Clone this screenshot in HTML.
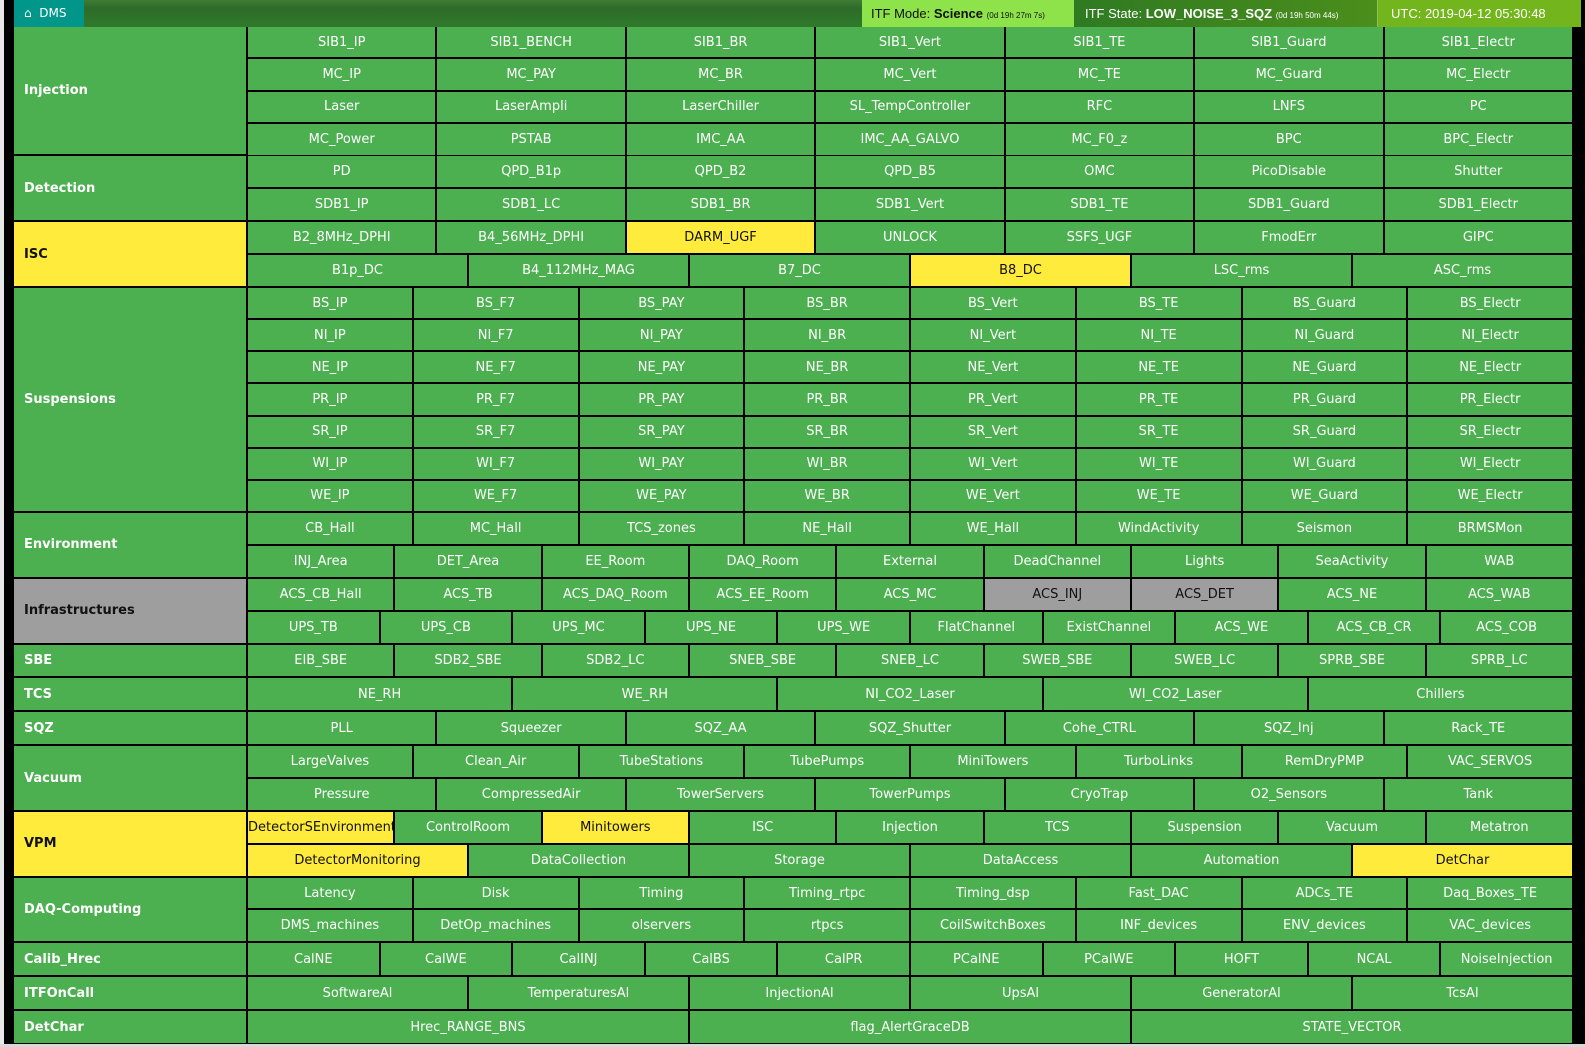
<!DOCTYPE html>
<html><head><meta charset="utf-8">
<style>
*{box-sizing:border-box;margin:0;padding:0}
html,body{width:1585px;height:1047px;overflow:hidden;background:#000;font-family:"DejaVu Sans","Liberation Sans",sans-serif}
#lstrip{position:absolute;left:0;top:0;width:4px;height:1047px;background:#e8e8e8}
#bot{position:absolute;left:0;top:1044px;width:1585px;height:3px;background:#d8d8d8}
#top{position:absolute;left:14px;top:0;width:1567px;height:27px;background:linear-gradient(#3f7d35,#2e6b2a 30%,#2f7a2b);}
#dms{position:absolute;left:0;top:0;width:70px;height:27px;background:#00968a;color:#fff;font-size:12px;line-height:27px;padding-left:10px}
.tb{position:absolute;top:0;height:27px;line-height:27px;font-size:13px;white-space:nowrap;font-family:"Liberation Sans",sans-serif;overflow:hidden}
.tb small{font-size:8px}
#mode{left:848px;width:212px;background:#8ee24a;color:#111;padding-left:9px}
#state{left:1060px;width:304px;background:linear-gradient(90deg,#2f7a22,#4b8e1c);color:#fff;padding-left:11px;border-right:1px solid #8fbf60}
#utc{left:1364px;width:203px;background:#72b51c;color:#fff;padding-left:13px}
#grid{position:absolute;left:14px;top:27px;width:1558px;height:1016px;display:flex;flex-direction:column;gap:2px;background:#000}
.g{display:flex;gap:2px;min-height:0}
.lab{width:232px;flex:none;background:#4caf50;color:#fff;font-weight:bold;font-size:13px;display:flex;align-items:center;padding-left:10px}
.r{flex:1;display:flex;flex-direction:column;gap:2px}
.s{flex:1;display:flex;gap:2px}
.s>div{flex:1 1 0;min-width:0;background:#4caf50;color:#fff;font-size:13px;text-align:center;white-space:nowrap;overflow:hidden;display:flex;align-items:center;justify-content:center}
.s>div.y,.lab.y{background:#ffeb3b;color:#111}
.s>div.gr,.lab.gr{background:#9e9e9e;color:#111}
.s>div.cl{justify-content:flex-start}
</style></head><body>
<div id="lstrip"></div>
<div id="top"><div id="dms">&#8962;&nbsp; DMS</div>
<div class="tb" id="mode">ITF Mode: <b>Science</b> <small>(0d 19h 27m 7s)</small></div>
<div class="tb" id="state">ITF State: <b>LOW_NOISE_3_SQZ</b> <small>(0d 19h 50m 44s)</small></div>
<div class="tb" id="utc">UTC: 2019-04-12 05:30:48</div>
</div>
<div id="grid">
<div class="g" style="flex:4"><div class="lab">Injection</div><div class="r">
<div class="s"><div>SIB1_IP</div><div>SIB1_BENCH</div><div>SIB1_BR</div><div>SIB1_Vert</div><div>SIB1_TE</div><div>SIB1_Guard</div><div>SIB1_Electr</div></div>
<div class="s"><div>MC_IP</div><div>MC_PAY</div><div>MC_BR</div><div>MC_Vert</div><div>MC_TE</div><div>MC_Guard</div><div>MC_Electr</div></div>
<div class="s"><div>Laser</div><div>LaserAmpli</div><div>LaserChiller</div><div>SL_TempController</div><div>RFC</div><div>LNFS</div><div>PC</div></div>
<div class="s"><div>MC_Power</div><div>PSTAB</div><div>IMC_AA</div><div>IMC_AA_GALVO</div><div>MC_F0_z</div><div>BPC</div><div>BPC_Electr</div></div>
</div></div>
<div class="g" style="flex:2"><div class="lab">Detection</div><div class="r">
<div class="s"><div>PD</div><div>QPD_B1p</div><div>QPD_B2</div><div>QPD_B5</div><div>OMC</div><div>PicoDisable</div><div>Shutter</div></div>
<div class="s"><div>SDB1_IP</div><div>SDB1_LC</div><div>SDB1_BR</div><div>SDB1_Vert</div><div>SDB1_TE</div><div>SDB1_Guard</div><div>SDB1_Electr</div></div>
</div></div>
<div class="g" style="flex:2"><div class="lab y">ISC</div><div class="r">
<div class="s"><div>B2_8MHz_DPHI</div><div>B4_56MHz_DPHI</div><div class="y">DARM_UGF</div><div>UNLOCK</div><div>SSFS_UGF</div><div>FmodErr</div><div>GIPC</div></div>
<div class="s"><div>B1p_DC</div><div>B4_112MHz_MAG</div><div>B7_DC</div><div class="y">B8_DC</div><div>LSC_rms</div><div>ASC_rms</div></div>
</div></div>
<div class="g" style="flex:7"><div class="lab">Suspensions</div><div class="r">
<div class="s"><div>BS_IP</div><div>BS_F7</div><div>BS_PAY</div><div>BS_BR</div><div>BS_Vert</div><div>BS_TE</div><div>BS_Guard</div><div>BS_Electr</div></div>
<div class="s"><div>NI_IP</div><div>NI_F7</div><div>NI_PAY</div><div>NI_BR</div><div>NI_Vert</div><div>NI_TE</div><div>NI_Guard</div><div>NI_Electr</div></div>
<div class="s"><div>NE_IP</div><div>NE_F7</div><div>NE_PAY</div><div>NE_BR</div><div>NE_Vert</div><div>NE_TE</div><div>NE_Guard</div><div>NE_Electr</div></div>
<div class="s"><div>PR_IP</div><div>PR_F7</div><div>PR_PAY</div><div>PR_BR</div><div>PR_Vert</div><div>PR_TE</div><div>PR_Guard</div><div>PR_Electr</div></div>
<div class="s"><div>SR_IP</div><div>SR_F7</div><div>SR_PAY</div><div>SR_BR</div><div>SR_Vert</div><div>SR_TE</div><div>SR_Guard</div><div>SR_Electr</div></div>
<div class="s"><div>WI_IP</div><div>WI_F7</div><div>WI_PAY</div><div>WI_BR</div><div>WI_Vert</div><div>WI_TE</div><div>WI_Guard</div><div>WI_Electr</div></div>
<div class="s"><div>WE_IP</div><div>WE_F7</div><div>WE_PAY</div><div>WE_BR</div><div>WE_Vert</div><div>WE_TE</div><div>WE_Guard</div><div>WE_Electr</div></div>
</div></div>
<div class="g" style="flex:2"><div class="lab">Environment</div><div class="r">
<div class="s"><div>CB_Hall</div><div>MC_Hall</div><div>TCS_zones</div><div>NE_Hall</div><div>WE_Hall</div><div>WindActivity</div><div>Seismon</div><div>BRMSMon</div></div>
<div class="s"><div>INJ_Area</div><div>DET_Area</div><div>EE_Room</div><div>DAQ_Room</div><div>External</div><div>DeadChannel</div><div>Lights</div><div>SeaActivity</div><div>WAB</div></div>
</div></div>
<div class="g" style="flex:2"><div class="lab gr">Infrastructures</div><div class="r">
<div class="s"><div>ACS_CB_Hall</div><div>ACS_TB</div><div>ACS_DAQ_Room</div><div>ACS_EE_Room</div><div>ACS_MC</div><div class="gr">ACS_INJ</div><div class="gr">ACS_DET</div><div>ACS_NE</div><div>ACS_WAB</div></div>
<div class="s"><div>UPS_TB</div><div>UPS_CB</div><div>UPS_MC</div><div>UPS_NE</div><div>UPS_WE</div><div>FlatChannel</div><div>ExistChannel</div><div>ACS_WE</div><div>ACS_CB_CR</div><div>ACS_COB</div></div>
</div></div>
<div class="g" style="flex:1"><div class="lab">SBE</div><div class="r">
<div class="s"><div>EIB_SBE</div><div>SDB2_SBE</div><div>SDB2_LC</div><div>SNEB_SBE</div><div>SNEB_LC</div><div>SWEB_SBE</div><div>SWEB_LC</div><div>SPRB_SBE</div><div>SPRB_LC</div></div>
</div></div>
<div class="g" style="flex:1"><div class="lab">TCS</div><div class="r">
<div class="s"><div>NE_RH</div><div>WE_RH</div><div>NI_CO2_Laser</div><div>WI_CO2_Laser</div><div>Chillers</div></div>
</div></div>
<div class="g" style="flex:1"><div class="lab">SQZ</div><div class="r">
<div class="s"><div>PLL</div><div>Squeezer</div><div>SQZ_AA</div><div>SQZ_Shutter</div><div>Cohe_CTRL</div><div>SQZ_Inj</div><div>Rack_TE</div></div>
</div></div>
<div class="g" style="flex:2"><div class="lab">Vacuum</div><div class="r">
<div class="s"><div>LargeValves</div><div>Clean_Air</div><div>TubeStations</div><div>TubePumps</div><div>MiniTowers</div><div>TurboLinks</div><div>RemDryPMP</div><div>VAC_SERVOS</div></div>
<div class="s"><div>Pressure</div><div>CompressedAir</div><div>TowerServers</div><div>TowerPumps</div><div>CryoTrap</div><div>O2_Sensors</div><div>Tank</div></div>
</div></div>
<div class="g" style="flex:2"><div class="lab y">VPM</div><div class="r">
<div class="s"><div class="y cl">DetectorSEnvironmentMonitoring</div><div>ControlRoom</div><div class="y">Minitowers</div><div>ISC</div><div>Injection</div><div>TCS</div><div>Suspension</div><div>Vacuum</div><div>Metatron</div></div>
<div class="s"><div class="y">DetectorMonitoring</div><div>DataCollection</div><div>Storage</div><div>DataAccess</div><div>Automation</div><div class="y">DetChar</div></div>
</div></div>
<div class="g" style="flex:2"><div class="lab">DAQ-Computing</div><div class="r">
<div class="s"><div>Latency</div><div>Disk</div><div>Timing</div><div>Timing_rtpc</div><div>Timing_dsp</div><div>Fast_DAC</div><div>ADCs_TE</div><div>Daq_Boxes_TE</div></div>
<div class="s"><div>DMS_machines</div><div>DetOp_machines</div><div>olservers</div><div>rtpcs</div><div>CoilSwitchBoxes</div><div>INF_devices</div><div>ENV_devices</div><div>VAC_devices</div></div>
</div></div>
<div class="g" style="flex:1"><div class="lab">Calib_Hrec</div><div class="r">
<div class="s"><div>CalNE</div><div>CalWE</div><div>CalINJ</div><div>CalBS</div><div>CalPR</div><div>PCalNE</div><div>PCalWE</div><div>HOFT</div><div>NCAL</div><div>NoiseInjection</div></div>
</div></div>
<div class="g" style="flex:1"><div class="lab">ITFOnCall</div><div class="r">
<div class="s"><div>SoftwareAl</div><div>TemperaturesAl</div><div>InjectionAl</div><div>UpsAl</div><div>GeneratorAl</div><div>TcsAl</div></div>
</div></div>
<div class="g" style="flex:1"><div class="lab">DetChar</div><div class="r">
<div class="s"><div>Hrec_RANGE_BNS</div><div>flag_AlertGraceDB</div><div>STATE_VECTOR</div></div>
</div></div>
</div>
<div id="bot"></div>
</body></html>
